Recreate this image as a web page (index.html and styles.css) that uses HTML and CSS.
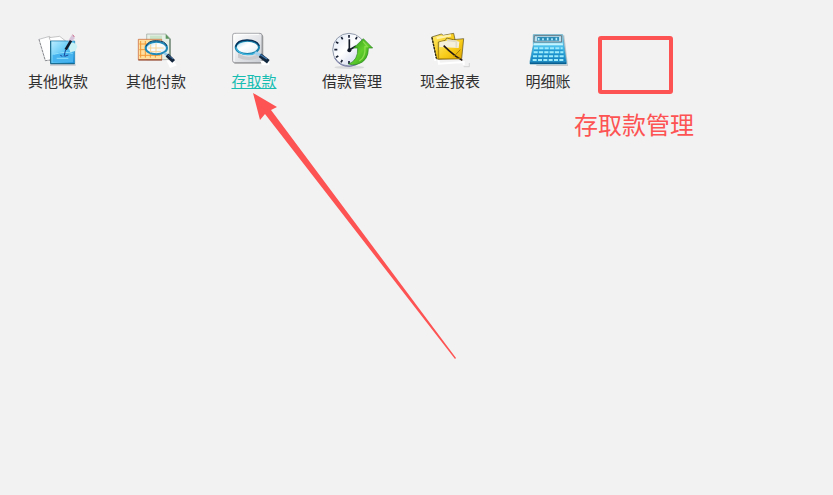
FILE: index.html
```html
<!DOCTYPE html>
<html lang="zh-CN">
<head>
<meta charset="utf-8">
<title>存取款管理</title>
<link rel="stylesheet" href="styles.css">
</head>
<body>
<main class="workspace">
  <svg class="defs" width="0" height="0" aria-hidden="true">
    <defs>
      <linearGradient id="blue" x1="0" y1="0" x2="1" y2="1"><stop offset="0" stop-color="#bdeeff"/><stop offset=".5" stop-color="#62c9f5"/><stop offset="1" stop-color="#1487d6"/></linearGradient>
      <linearGradient id="blueDown" x1="0" y1="0" x2="0" y2="1"><stop offset="0" stop-color="#c5f0fa"/><stop offset=".45" stop-color="#3cb9ea"/><stop offset="1" stop-color="#0875b5"/></linearGradient>
      <linearGradient id="paper" x1="0" y1="0" x2="1" y2="1"><stop offset="0" stop-color="#fff"/><stop offset="1" stop-color="#c9cdd3"/></linearGradient>
      <linearGradient id="lens" x1="0" y1="0" x2="1" y2="1"><stop offset="0" stop-color="#9fd9ee"/><stop offset=".4" stop-color="#fff"/><stop offset="1" stop-color="#dfecf3"/></linearGradient>
      <linearGradient id="face" x1="0" y1="0" x2="1" y2="1"><stop offset="0" stop-color="#dce6f4"/><stop offset=".45" stop-color="#fff"/><stop offset="1" stop-color="#bcc5e4"/></linearGradient>
      <linearGradient id="green" x1="0" y1="0" x2="1" y2="1"><stop offset="0" stop-color="#258c18"/><stop offset=".5" stop-color="#62cf2c"/><stop offset="1" stop-color="#2b9918"/></linearGradient>
      <linearGradient id="gold" x1="0" y1="0" x2="1" y2="1"><stop offset="0" stop-color="#ffec72"/><stop offset=".55" stop-color="#f8cb18"/><stop offset="1" stop-color="#dca400"/></linearGradient>
    </defs>
  </svg>
  <nav class="menu" aria-label="现金管理">
    <a class="item" href="#receipt">
      <svg class="icon" viewBox="42 15 144 120" aria-hidden="true">
        <path d="M57 43 89 34 107 103 76 107z" fill="#fff" stroke="#a9aaad" stroke-width="2"/>
        <path d="M57 43 76 107 92 105" fill="none" stroke="#6d6e74" stroke-width="2" stroke-dasharray="7 4"/>
        <path d="M87 38 119 34 137 48H92z" fill="#fff" stroke="#aaa" stroke-width="2"/>
        <path d="M90 120h77" stroke="#c9cbd0" stroke-width="5"/>
        <path d="M92 48h72v68H92z" fill="url(#blue)" stroke="#1a7fb2" stroke-width="2"/>
        <path d="M92 48v68h72" fill="none" stroke="#136487" stroke-width="3"/>
        <path d="M98 90q30-17 61-5v27H98z" fill="#46b3ee"/>
        <path d="M101 88q35-10 57-3M110 100h35" stroke="#8fe1fc" stroke-width="3" fill="none"/>
        <path d="m153 52 15 4 4 9-6 13-15 4-4-12z" fill="#c9f2f6"/>
        <path d="m156 29 9 10-12 13-9-4z" fill="#d7c3d9"/>
        <path d="m158 29 5 7" stroke="#c96787" stroke-width="3"/>
        <path d="m153 47-16 27" stroke="#111d2b" stroke-width="8"/>
        <path d="m137 74-5 20M121 91l6 3M134 94l11-4" stroke="#174598" stroke-width="3"/>
      </svg>
      <span class="label">其他收款</span>
    </a>
    <a class="item" href="#payment">
      <svg class="icon" viewBox="42 15 144 120" aria-hidden="true">
        <path d="M86 27h57l13 13v64H86z" fill="#e6efe5" stroke="#9ca49d" stroke-width="2"/>
        <path d="M96 32h36v12H96z" fill="#c9e4c9"/>
        <path d="M143 27v14h13z" fill="#5b955e"/><path d="M156 41v55" stroke="#42664c" stroke-width="3"/>
        <path d="M61 43h70v61H61z" fill="#ffe0a0" stroke="#c55a2a" stroke-width="2"/>
        <path d="M68 48v50M82 48v50M97 48v50M112 48v50M64 57h63M64 74h63M64 91h63" stroke="#f49a35" stroke-width="3"/>
        <path d="M61 105h71" stroke="#8c3c25" stroke-width="3"/>
        <path d="M145 106h19l13 15-21 8z" fill="#fff"/>
        <ellipse cx="115" cy="69" rx="32" ry="19" fill="url(#lens)" stroke="#2089b8" stroke-width="6"/>
        <path d="M84 64q7-18 31-17 27 0 32 16" fill="none" stroke="#113d66" stroke-width="3"/>
        <path d="M91 69h46M98 80h31M98 58v25M114 55v29" stroke="#f8d497" stroke-width="3"/>
        <path d="m139 84 11 8" stroke="#91c8e8" stroke-width="8"/>
        <path d="m147 90 20 19" stroke="#13263d" stroke-width="12"/>
        <path d="m149 89 16 13" stroke="#4577ae" stroke-width="3"/>
      </svg>
      <span class="label">其他付款</span>
    </a>
    <a class="item item-active" href="#deposit" aria-current="page">
      <svg class="icon" viewBox="48 15 144 120" aria-hidden="true">
        <path d="M61 29h82q5 0 5 6v76q0 5-6 5H61z" fill="#aaa"/>
        <rect x="56" y="25" width="88" height="88" rx="6" fill="url(#paper)" stroke="#77797e" stroke-width="2"/>
        <path d="M60 109V34q0-6 7-6h68" fill="none" stroke="#fff" stroke-width="3"/>
        <path d="M139 108h27v13h-22z" fill="#fff"/>
        <path d="M72 85q31 21 61 2v12q-31 13-61-1z" fill="#c9cace"/>
        <ellipse cx="100" cy="67" rx="35" ry="20" fill="url(#lens)" stroke="#1780ac" stroke-width="6"/>
        <path d="M65 65q4-20 34-20 29 0 37 17" fill="none" stroke="#092d54" stroke-width="4"/>
        <path d="M67 70q8 18 34 19 18 0 29-9" fill="none" stroke="#43b7df" stroke-width="4"/>
        <path d="m123 83 17 8" stroke="#a3d0ed" stroke-width="9"/>
        <path d="m138 91 25 19" stroke="#11283e" stroke-width="13"/>
        <path d="m138 88 21 14" stroke="#4077ad" stroke-width="4"/>
      </svg>
      <span class="label">存取款</span>
    </a>
    <a class="item" href="#loan">
      <svg class="icon" viewBox="48 15 144 120" aria-hidden="true">
        <ellipse cx="112" cy="127" rx="45" ry="5" fill="#d9dadb"/>
        <circle cx="111" cy="74" r="49" fill="url(#face)" stroke="#929bac" stroke-width="3"/>
        <path d="M67 98q15 28 48 26 20-2 31-15" fill="none" stroke="#7477a4" stroke-width="3"/>
        <path d="M111 30v8M111 108v9M67 74h9M88 36l4 7M72 51l7 4M72 97l7-4M87 112l4-7M135 36l-4 7" stroke="#182034" stroke-width="5"/>
        <path d="M112 77V43M112 75l20-12" fill="none" stroke="#131b29" stroke-width="5"/><circle cx="112" cy="76" r="6" fill="#101827"/>
        <path d="m154 41 28 28h-13q1 40-34 49-14 3-25-1 29-11 27-48h-12z" fill="url(#green)" stroke="#28841f" stroke-width="2"/>
        <path d="m153 49 13 16h-7q2 32-17 43" fill="none" stroke="#8bdd50" stroke-width="4"/>
      </svg>
      <span class="label">借款管理</span>
    </a>
    <a class="item" href="#report">
      <svg class="icon" viewBox="48 15 144 120" aria-hidden="true">
        <path d="m76 39 11 77 74-5v9M68 38l8 70" fill="none" stroke="#fff" stroke-width="6"/>
        <path d="m65 36 29-9 6 4 31-6 4 18-8 55-47 4z" fill="url(#gold)" stroke="#554a20" stroke-width="2"/>
        <path d="m66 37 13 63" stroke="#29261a" stroke-width="4" stroke-dasharray="7 3"/>
        <path d="m80 39 43-8" stroke="#fff1aa" stroke-width="7"/>
        <path d="m85 51 21-5 4-7 20 5 31-3-6 60-70 2z" fill="url(#gold)" stroke="#57481b" stroke-width="2"/>
        <path d="m89 51 39-6 20 5-2 19-58-3z" fill="#f5f0da"/>
        <path d="m111 46 28 3v19" fill="none" stroke="#e1dcc8" stroke-width="5"/>
        <path d="M86 75v26h62" fill="none" stroke="#bc9109" stroke-width="3"/>
        <path d="m101 62 16 15 21 17 19 12" fill="none" stroke="#251914" stroke-width="5"/>
        <path d="m132 94 19-20M139 100h13" stroke="#a87e00" stroke-width="3"/>
        <path d="M161 125h17v-11" fill="none" stroke="#c5c5c5" stroke-width="2"/>
      </svg>
      <span class="label">现金报表</span>
    </a>
    <a class="item" href="#ledger">
      <svg class="icon" viewBox="48 15 144 120" aria-hidden="true">
        <path d="M85 121h93l-11-90" fill="none" stroke="#c5c9cc" stroke-width="4"/>
        <path d="M76 29h88l4 32 7 50v6H66v-7l10-49z" fill="url(#blueDown)" stroke="#3b95b9" stroke-width="2"/>
        <path d="M79 32h82v19H78z" fill="#b8e0f0" stroke="#60747e" stroke-width="3"/>
        <path d="M88 36h65v11H87z" fill="#2b8bb5"/>
        <path d="M92 46v-7M105 46v-6M119 46v-8M132 46v-6M145 46v-8" stroke="#b3edff" stroke-width="5"/>
        <path d="M77 55h87l1 6H76z" fill="#c4f5ff"/>
        <path d="M78 70h86M77 82h89M75 94h92M74 105h95" stroke="#9eeafa" stroke-width="6" stroke-dasharray="12 4"/>
        <path d="M78 76h86M76 88h90M74 100h94" stroke="#1688c2" stroke-width="2"/>
        <path d="M67 111h107v6H66z" fill="#075f91"/><path d="M68 111h105" stroke="#39a8d5" stroke-width="2"/>
      </svg>
      <span class="label">明细账</span>
    </a>
  </nav>
  <svg class="arrow" viewBox="0 0 206 268" aria-hidden="true">
    <path d="M1 1 25 15 19 18 204 266 203 267 13 22 8 28z" fill="#fd5353"/>
  </svg>
  <div class="highlight"></div>
  <p class="note">存取款管理</p>
</main>
</body>
</html>
```
FILE: styles.css
```css
body {
  margin: 0;
  background: #f2f2f2;
  color: #303030;
  font-family: "Noto Sans CJK SC", sans-serif;
}

.workspace {
  position: relative;
  min-height: 100vh;
}

.defs {
  position: absolute;
}

.menu {
  display: flex;
  padding: 30px 9px 0;
}

.item {
  display: flex;
  flex: 0 0 98px;
  flex-direction: column;
  align-items: center;
  color: inherit;
  font-size: 15px;
  line-height: 22px;
  text-decoration: none;
}

.item:hover,
.item-active {
  color: #18bdb2;
  text-decoration: underline;
}

.icon {
  width: 48px;
  height: 40px;
}

/* Annotations drawn over the workspace */
.arrow {
  position: absolute;
  top: 92px;
  left: 252px;
  width: 206px;
  height: 268px;
  pointer-events: none;
}

.highlight {
  position: absolute;
  top: 36px;
  left: 598px;
  box-sizing: border-box;
  width: 75px;
  height: 58px;
  border: 4px solid #fd5353;
  border-radius: 3px;
}

.note {
  position: absolute;
  top: 108px;
  left: 574px;
  margin: 0;
  color: #fd5353;
  font-size: 24px;
  line-height: 32px;
  white-space: nowrap;
}
```
